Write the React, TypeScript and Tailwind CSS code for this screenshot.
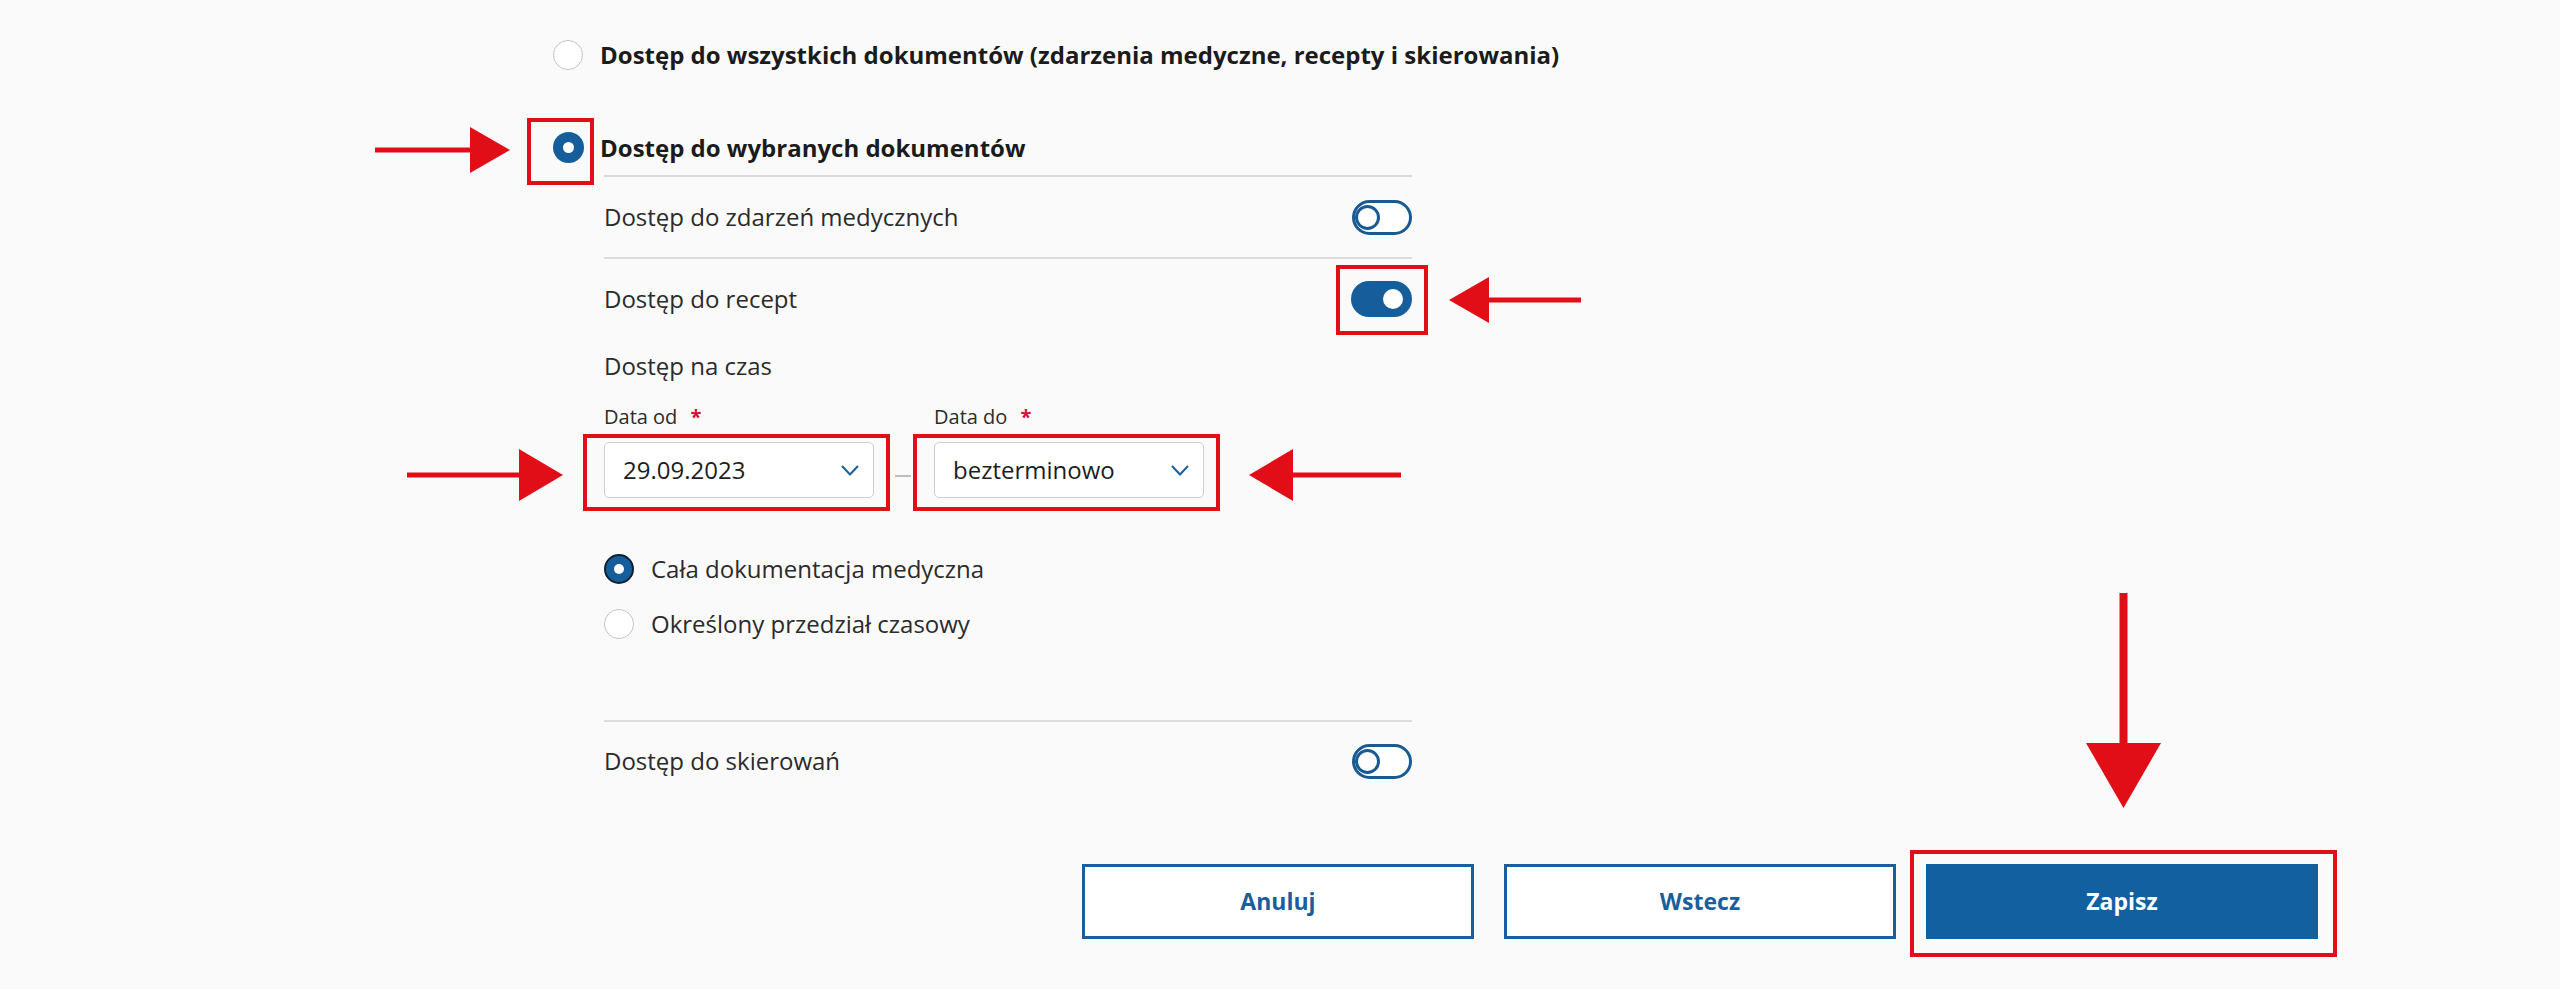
import React from 'react';

const RED = '#e10d17';

type ArrowProps = { dir: 'left' | 'right' | 'down'; len: number; head: number; headH: number; thick: number; className: string };

// annotation arrow drawn over the form
const Arrow: React.FC<ArrowProps> = ({ dir, len, head, headH, thick, className }) => {
  const c = headH / 2;
  if (dir === 'down') {
    return (
      <svg className={className} width={headH} height={len} viewBox={`0 0 ${headH} ${len}`}>
        <rect x={c - thick / 2} y={0} width={thick} height={len - head} fill={RED} />
        <polygon points={`0,${len - head} ${headH},${len - head} ${c},${len}`} fill={RED} />
      </svg>
    );
  }
  const shaft = dir === 'right'
    ? <rect x={0} y={c - thick / 2} width={len - head} height={thick} fill={RED} />
    : <rect x={head} y={c - thick / 2} width={len - head} height={thick} fill={RED} />;
  const tip = dir === 'right'
    ? <polygon points={`${len - head},0 ${len},${c} ${len - head},${headH}`} fill={RED} />
    : <polygon points={`${head},0 0,${c} ${head},${headH}`} fill={RED} />;
  return (
    <svg className={className} width={len} height={headH} viewBox={`0 0 ${len} ${headH}`}>
      {shaft}
      {tip}
    </svg>
  );
};

const Toggle: React.FC<{ on?: boolean }> = ({ on }) =>
  on ? (
    <div className="relative w-[61px] h-[36px] rounded-full bg-[#155d9b]">
      <span className="absolute right-[9px] top-[8px] w-[20px] h-[20px] rounded-full bg-white" />
    </div>
  ) : (
    <div className="relative w-[60px] h-[35px] rounded-full border-[3px] border-[#1a5a92] bg-white">
      <span className="absolute left-0 top-[2px] w-[25px] h-[25px] rounded-full border-[3px] border-[#1a5a92] bg-white" />
    </div>
  );

const Chevron = () => (
  <svg width="18" height="11" viewBox="0 0 18 11" fill="none">
    <polyline points="1,1 9,9.5 17,1" stroke="#1b5f9c" strokeWidth="2" />
  </svg>
);

const DateSelect: React.FC<{ label: string; value: string }> = ({ label, value }) => (
  <div className="flex flex-col">
    <div className="text-[20px] leading-[28px] text-[#2b2b2b]">
      {label} <span className="ml-[8px] text-[#d0103a] font-bold">*</span>
    </div>
    <div className="relative mt-[11px]">
      <div className="w-[270px] h-[56px] rounded-[5px] border border-[#cfcfcf] bg-white flex items-center justify-between pl-[18px] pr-[14px]">
        <span className="text-[24px] text-[#1e1e1e]">{value}</span>
        <Chevron />
      </div>
      <span className="absolute -left-[21px] -right-[16px] -top-[8px] -bottom-[13px] border-4 border-[#e10d17]" />
    </div>
  </div>
);

export default function App() {
  return (
    <div className="relative w-full h-[989px] overflow-hidden bg-[#fafafa] font-['Open_Sans',sans-serif] text-[#222]">
      <div className="pl-[553px] pt-[40px]">
        <div className="w-[859px]">
          <div className="flex items-center gap-[17px] h-[30px] whitespace-nowrap">
            <span className="w-[30px] h-[30px] rounded-full border-[1.5px] border-[#c4c4c4] bg-white shrink-0" />
            <span className="text-[24px] font-bold text-[#1b1b1b]">
              Dostęp do wszystkich dokumentów (zdarzenia medyczne, recepty i skierowania)
            </span>
          </div>

          <div className="relative mt-[62px] flex items-center gap-[16px] h-[31px] whitespace-nowrap">
            <span className="relative w-[31px] h-[31px] rounded-full bg-[#155d9b] flex items-center justify-center shrink-0">
              <span className="w-[11px] h-[11px] rounded-full bg-white" />
              <span className="absolute -left-[26px] -right-[10px] -top-[14px] -bottom-[22px] border-4 border-[#e10d17]" />
            </span>
            <span className="text-[24px] font-bold text-[#1b1b1b]">Dostęp do wybranych dokumentów</span>
          </div>

          <div className="ml-[51px] mt-[12px] border-t-2 border-[#dcdcdc]">
            <div className="h-[82px] flex items-center justify-between border-b-2 border-[#dcdcdc]">
              <span className="text-[24px] text-[#2b2b2b]">Dostęp do zdarzeń medycznych</span>
              <Toggle />
            </div>

            <div className="pt-[22px] flex items-center justify-between">
              <span className="text-[24px] text-[#2b2b2b]">Dostęp do recept</span>
              <div className="relative">
                <Toggle on />
                <span className="absolute -left-[15px] -right-[16px] -top-[16px] -bottom-[18px] border-4 border-[#e10d17]" />
              </div>
            </div>

            <div className="mt-[32px] text-[24px] leading-[33px] text-[#2b2b2b]">Dostęp na czas</div>

            <div className="mt-[21px] flex items-end">
              <DateSelect label="Data od" value="29.09.2023" />
              <span className="mb-[21px] ml-[21px] mr-[23px] w-[16px] h-[2px] bg-[#bdbdbd]" />
              <DateSelect label="Data do" value="bezterminowo" />
            </div>

            <div className="mt-[56px] flex flex-col gap-[25px]">
              <div className="flex items-center gap-[17px] h-[30px]">
                <span className="w-[30px] h-[30px] rounded-full bg-[#155d9b] border-2 border-[#0c2233] flex items-center justify-center">
                  <span className="w-[10px] h-[10px] rounded-full bg-white" />
                </span>
                <span className="text-[24px] text-[#2b2b2b]">Cała dokumentacja medyczna</span>
              </div>
              <div className="flex items-center gap-[17px] h-[30px]">
                <span className="w-[30px] h-[30px] rounded-full border-[1.5px] border-[#c4c4c4] bg-white" />
                <span className="text-[24px] text-[#2b2b2b]">Określony przedział czasowy</span>
              </div>
            </div>

            <div className="mt-[81px] border-t-2 border-[#dcdcdc] pt-[21px] flex items-center justify-between">
              <span className="text-[24px] text-[#2b2b2b]">Dostęp do skierowań</span>
              <Toggle />
            </div>
          </div>
        </div>
      </div>

      <div className="mt-[85px] flex justify-end gap-[30px] pr-[242px]">
        <button className="w-[392px] h-[75px] border-[3px] border-[#1a5e9b] bg-white text-[23px] font-bold text-[#1a5e9b]">
          Anuluj
        </button>
        <button className="w-[392px] h-[75px] border-[3px] border-[#1a5e9b] bg-white text-[23px] font-bold text-[#1a5e9b]">
          Wstecz
        </button>
        <div className="relative">
          <button className="w-[392px] h-[75px] bg-[#1360a0] text-[23px] font-bold text-white">Zapisz</button>
          <span className="absolute -left-[16px] -right-[19px] -top-[14px] -bottom-[18px] border-4 border-[#e10d17]" />
        </div>
      </div>

      <Arrow dir="right" len={135} head={40} headH={46} thick={5} className="absolute left-[375px] top-[127px]" />
      <Arrow dir="left" len={132} head={40} headH={46} thick={5} className="absolute left-[1449px] top-[277px]" />
      <Arrow dir="right" len={156} head={44} headH={52} thick={5} className="absolute left-[407px] top-[449px]" />
      <Arrow dir="left" len={152} head={44} headH={52} thick={5} className="absolute left-[1249px] top-[449px]" />
      <Arrow dir="down" len={215} head={65} headH={75} thick={8} className="absolute left-[2086px] top-[593px]" />
    </div>
  );
}
